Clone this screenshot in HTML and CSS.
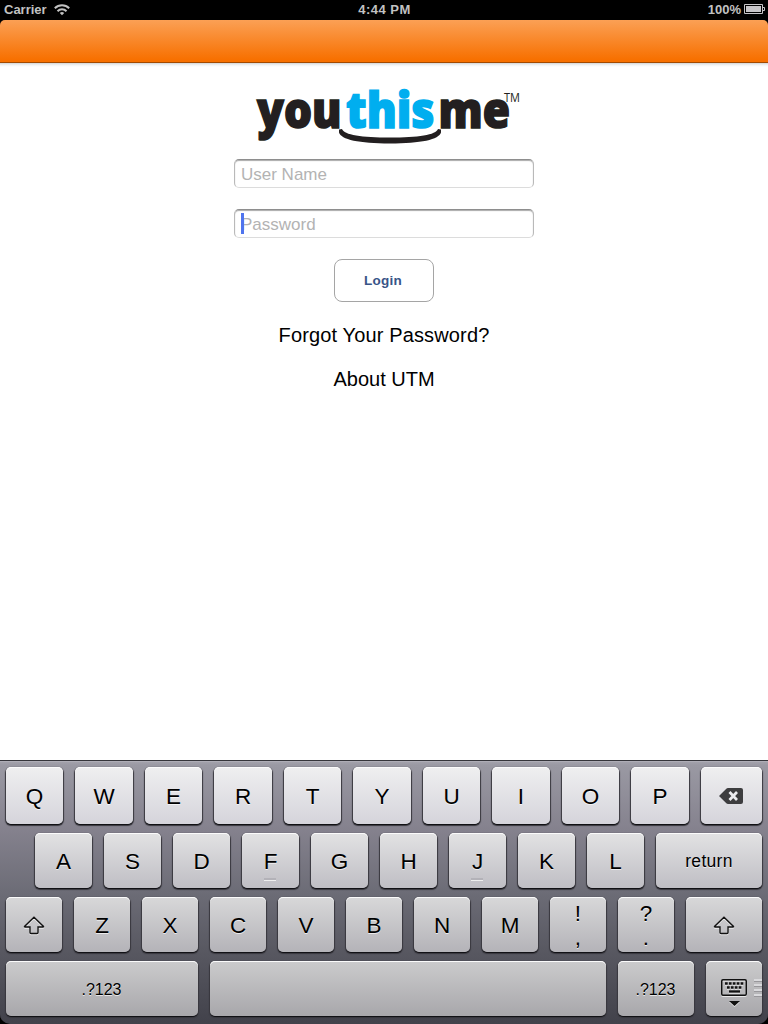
FILE: index.html
```
<!DOCTYPE html>
<html lang="en">
<head>
<meta charset="utf-8">
<title>youthisme</title>
<link rel="stylesheet" href="styles.css">
</head>
<body>
<div class="screen">
  <header class="status">
    <div class="status-left"><span class="carrier">Carrier</span>
      <svg class="wifi" width="16" height="12" viewBox="0 0 16 12" fill="none" stroke="#c2c2c2" stroke-width="2"><path d="M.8 4.300a10.300 10.300 0 0 1 14.400 0M3.500 7.200a6.300 6.300 0 0 1 9 0"/><path d="M8 11.300 5.800 9.100a3.200 3.200 0 0 1 4.400 0z" fill="#c2c2c2" stroke="none"/></svg>
    </div>
    <div class="clock">4:44 PM</div>
    <div class="status-right"><span class="percent">100%</span>
      <svg class="battery" width="21" height="10" viewBox="0 0 21 10"><path d="M.5.5h18v9H.5z" fill="none" stroke="#c7c5c8"/><path d="M2 2h15v6H2z" fill="#c7c5c8"/><path d="M19 3.500h1.500v3H19" fill="none" stroke="#c7c5c8"/></svg>
    </div>
  </header>
  <div class="nav-wrap"><nav class="navbar"></nav></div>
  <main class="login">
    <svg class="logo" width="268" height="62" viewBox="254 84 268 62" role="img" aria-label="youthisme">
      <path d="M339 129.500l3-.5c2 6 20 8.500 48 8.500s46-2.500 48-8.500l3 .5v3c-2 7-20 11-51 11s-49-4-51-11z" fill="#231f20"/>
      <g class="logo-text" fill="#231f20" stroke="#231f20">
        <text x="257" y="127.800" textLength="84.500" lengthAdjust="spacingAndGlyphs">you</text>
        <text x="346" y="127.800" textLength="88.500" lengthAdjust="spacingAndGlyphs" fill="#00aeef" stroke="#00aeef">this</text>
        <text x="438.500" y="127.800" textLength="71.500" lengthAdjust="spacingAndGlyphs">me</text>
      </g>
      <text class="logo-tm" x="504" y="101.500" textLength="16" lengthAdjust="spacingAndGlyphs" fill="#231f20">TM</text>
    </svg>
    <div class="field">User Name</div>
    <div class="field field-active">Password</div>
    <div class="login-button">Login</div>
    <div class="link forgot">Forgot Your Password?</div>
    <div class="link about">About UTM</div>
  </main>
  <section class="keyboard-wrap"><div class="keyboard">
    <div class="row row-1">
      <div class="key">Q</div><div class="key">W</div><div class="key">E</div><div class="key">R</div><div class="key">T</div><div class="key">Y</div><div class="key">U</div><div class="key">I</div><div class="key">O</div><div class="key">P</div>
      <div class="key grow backspace"><svg width="24" height="16" viewBox="0 0 24 16"><path d="M0 8 7.300.7Q8 0 9 0h13q2 0 2 2v12q0 2-2 2H9q-1 0-1.700-.7z" fill="#3d3d3f"/><path d="m10.500 4 7.500 8m0-8-7.500 8" stroke="#ececef" stroke-width="2.700"/></svg></div>
    </div>
    <div class="row row-2">
      <div class="key">A</div><div class="key">S</div><div class="key">D</div><div class="key home">F</div><div class="key">G</div><div class="key">H</div><div class="key home">J</div><div class="key">K</div><div class="key">L</div>
      <div class="key grow word return">return</div>
    </div>
    <div class="row row-3">
      <div class="key"><svg class="shift" width="22" height="19" viewBox="0 0 22 19"><path d="M11 1.200 20.500 10.500Q20.800 11 20 11H15v5.500q0 1-1 1H8q-1 0-1-1V11H2q-.8 0-.5-.5z" fill="none" stroke="#111" stroke-width="1.400"/></svg></div>
      <div class="key">Z</div><div class="key">X</div><div class="key">C</div><div class="key">V</div><div class="key">B</div><div class="key">N</div><div class="key">M</div>
      <div class="key pair"><span>!</span><span>,</span></div><div class="key pair"><span>?</span><span>.</span></div>
      <div class="key grow"><svg class="shift" width="22" height="19" viewBox="0 0 22 19"><path d="M11 1.200 20.500 10.500Q20.800 11 20 11H15v5.500q0 1-1 1H8q-1 0-1-1V11H2q-.8 0-.5-.5z" fill="none" stroke="#111" stroke-width="1.400"/></svg></div>
    </div>
    <div class="row row-4">
      <div class="key word numbers-wide">.?123</div>
      <div class="key space"></div>
      <div class="key word numbers">.?123</div>
      <div class="key grow hide">
        <svg class="shift" width="26" height="28" viewBox="0 0 26 28"><rect x=".75" y=".75" width="24.500" height="15.500" rx="1.200" fill="none" stroke="#111" stroke-width="1.500"/><path d="M4 4.500h18.500" stroke="#111" stroke-width="2.500" stroke-dasharray="2.700 1.200"/><path d="M6 8.500h15" stroke="#111" stroke-width="2.500" stroke-dasharray="2.700 1.200"/><path d="M8 12.500h11" stroke="#111" stroke-width="2.300"/><path d="M8 22h11l-5.500 5z" fill="#111"/></svg>
        <span class="grip"></span>
      </div>
    </div>
  </div></section>
</div>
</body>
</html>
```
FILE: styles.css
```
* { box-sizing: border-box; }
body { margin: 0; background: #fff; font-family: "Liberation Sans", Arial, sans-serif; color: #000; }
.screen { width: 768px; height: 1024px; display: flex; flex-direction: column; overflow: hidden; }
svg { display: block; flex: none; }

.status { height: 20px; flex: none; background: #000; color: #c2c2c2; display: grid; grid-template-columns: 1fr auto 1fr; align-items: center; font-size: 13px; line-height: 20px; font-weight: bold; padding: 0 3px 0 4px; }
.status-left, .status-right { display: flex; align-items: center; height: 20px; }
.status-left { gap: 7px; }
.status-right { justify-content: flex-end; gap: 3px; }
.clock { letter-spacing: .5px; }
.battery { margin-bottom: 2px; }
.nav-wrap { background: #000; height: 43px; flex: none; }
.navbar { height: 43px; border-radius: 5px 5px 0 0; background: linear-gradient(#fba055, #f77000 95%); border-bottom: 1px solid #a34a00; }

.login { flex: 1; display: flex; flex-direction: column; align-items: center; background: linear-gradient(#d2d6d8, #f2f3f3 2px, #fff 4px); }
.logo { margin: 21px 0 13px 8px; overflow: visible; }
.logo-text { font: 800 50px "Open Sans", sans-serif; stroke-width: 1.600px; }
.logo-tm { font: 12px "Open Sans", sans-serif; }
.field { width: 300px; height: 29px; margin-bottom: 21px; padding-left: 6px; border: 1px solid; border-color: #8e8e8e #b9b9b9 #dcdcdc; border-radius: 5px; box-shadow: inset 0 1px 1px #aaa; color: #b3b3b3; font-size: 17px; line-height: 29px; position: relative; }
.field-active::before { content: ""; position: absolute; left: 6px; top: 3px; width: 3px; height: 21px; background: #4f74ee; }
.login-button { width: 100px; height: 43px; border: 1px solid #a5a5a5; border-radius: 8px; color: #385487; font-size: 13.500px; letter-spacing: .3px; font-weight: bold; line-height: 41px; padding-right: 2px; text-align: center; }
.link { font-size: 20px; line-height: 24px; }
.forgot { margin-top: 21px; letter-spacing: .14px; }
.about { margin-top: 20px; }

.keyboard-wrap { flex: none; height: 264px; background: #000; }
.keyboard { height: 264px; border-top: 1px solid #34343a; border-radius: 0 0 10px 10px; background: linear-gradient(#a5a4ad 0, #9a99a3 4px, #85828e 67px, #6c6c76 132px, #585861 190px, #42424b 262px); box-shadow: inset 0 1px #aeadb6; padding: 6px 6px 0; }
.row { display: flex; gap: 12px; height: 56px; margin-bottom: 8px; }
.key { height: 55px; flex: none; border-radius: 5px; display: flex; align-items: center; justify-content: center; font-size: 22.500px; position: relative; box-shadow: 0 1px 0 #111115, 0 1px 1px 1px #38373e, inset 0 1px #fbfbfb; text-shadow: 0 1px rgba(255,255,255,.7); padding-top: 2px; }
.row .grow { flex: 1; }
.row-1 { height: 58px; }
.row-1 .key { width: 57px; height: 57px; background: linear-gradient(#efeff0, #d5d4db); }
.row-1 .key:nth-child(even) { width: 58px; }
.row-1 .backspace { padding-right: 2px; padding-top: 1px; }
.row-2 { padding-left: 29px; }
.row-2 .key { width: 57px; background: linear-gradient(#e2e2e3, #bfbec4); }
.row-3 .key { width: 56px; background: linear-gradient(#d8d8d9, #b4b3b8); }
.row-4 .key { background: linear-gradient(#cbcbcc, #a8a7ab); }
.row .word { font-size: 17.500px; }
.row .return { letter-spacing: .3px; }
.row-4 .word { font-size: 16px; padding-top: 3px; }
.row-4 .numbers-wide { width: 192px; padding-right: 1px; }
.space { width: 396px; }
.row-4 .numbers { width: 76px; padding-right: 1px; }
.home::after { content: ""; position: absolute; left: 22px; top: 45px; width: 12px; height: 2px; background: #b3b2b8; border-bottom: 1px solid #eee; }
.shift { filter: drop-shadow(0 1px 0 rgba(255,255,255,.7)); }
.row-3 .pair { flex-direction: column; line-height: 24px; justify-content: flex-start; padding-top: 5px; }
.row-4 .hide { padding-top: 9px; }
.grip { position: absolute; right: 0; top: 18px; width: 8px; height: 18px; background: repeating-linear-gradient(#d9d9dc 0, #d9d9dc 2px, #98979b 2px, #98979b 3px, transparent 3px, transparent 5px); }
```
